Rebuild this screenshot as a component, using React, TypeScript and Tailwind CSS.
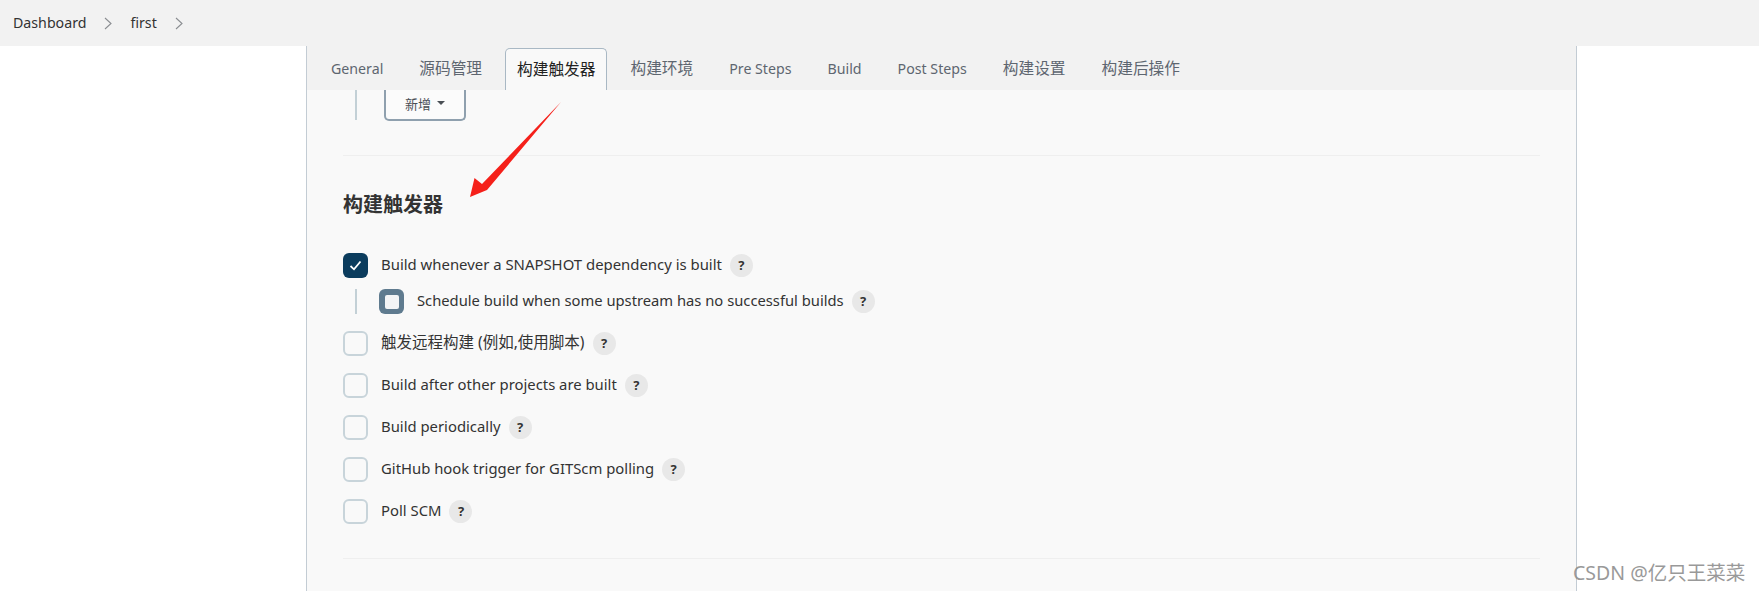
import React from "react";

const font = { fontFamily: '"Noto Sans", "Noto Sans CJK SC", sans-serif' };

const tabs = [
  { name: "General", cjk: false },
  { name: "源码管理", cjk: true },
  { name: "构建触发器", cjk: true, active: true },
  { name: "构建环境", cjk: true },
  { name: "Pre Steps", cjk: false },
  { name: "Build", cjk: false },
  { name: "Post Steps", cjk: false },
  { name: "构建设置", cjk: true },
  { name: "构建后操作", cjk: true },
];

const Chevron = () => (
  <svg width="8" height="13" viewBox="0 0 8 13" fill="none" stroke="#8a8d91" strokeWidth="1.1">
    <polyline points="1,1 7,6.5 1,12" />
  </svg>
);

const Help = () => (
  <span className="ml-[8px] flex h-[23px] w-[23px] shrink-0 items-center justify-center rounded-full bg-[#e8e8e8] text-[13px] font-bold text-[#333]">
    ?
  </span>
);

const Box = () => (
  <span className="box-border h-[25px] w-[25px] shrink-0 rounded-[6px] border-[2px] border-[#c8d4da] bg-[#f9f9f9]" />
);

const Row = ({ label, cjk }: { label: string; cjk?: boolean }) => (
  <div className="mt-[17px] flex h-[25px] items-center">
    <Box />
    <span className={cjk ? "ml-[13px] whitespace-nowrap pb-[2px] text-[15.5px] text-[#333]" : "ml-[13px] whitespace-nowrap pb-[2px] text-[14.85px] text-[#333]"}>
      {label}
    </span>
    <Help />
  </div>
);

const App = () => {
  return (
    <div className="relative h-[591px] w-full overflow-hidden bg-white" style={font}>
      <div className="flex h-[46px] items-center bg-[#f2f2f2] pl-[13px] text-[14.2px] text-[#333]">
        <span>Dashboard</span>
        <span className="ml-[18px]"><Chevron /></span>
        <span className="ml-[18px]">first</span>
        <span className="ml-[18px]"><Chevron /></span>
      </div>

      <div className="ml-[306px] h-[545px] w-[1271px] border-x border-[#c3ccd4] bg-[#f9f9f9]">
        <div className="flex h-[44px] items-end gap-[10px] bg-[#f2f2f2] pl-[11px]">
          {tabs.map((tab) =>
            tab.active ? (
              <div
                key={tab.name}
                className="flex h-[42px] items-center rounded-t-[5px] border-x border-t border-[#a9b8c4] bg-[#f9f9f9] px-[11px] text-[15.7px] text-[#222]"
              >
                {tab.name}
              </div>
            ) : (
              <div
                key={tab.name}
                className={tab.cjk ? "flex h-[42px] items-center px-[13px] text-[15.7px] text-[#5e6670]" : "flex h-[42px] items-center px-[13px] text-[14.2px] text-[#5e6670]"}
              >
                {tab.name}
              </div>
            )
          )}
        </div>

        <div className="px-[36px]">
          <div className="flex h-[31px]">
            <div className="ml-[12px] h-[30px] w-[2px] bg-[#c3d0d6]" />
            <div className="ml-[27px] flex h-[31px] w-[82px] items-center justify-center gap-[6px] rounded-b-[5px] border-x-2 border-b-2 border-[#8fa0ae] bg-[#fbfbfb] text-[13px] text-[#4a4f55]">
              <span>新增</span>
              <span className="mb-[3px] h-0 w-0 border-x-[4px] border-t-[4px] border-x-transparent border-t-[#4a4f55]" />
            </div>
          </div>

          <div className="mt-[34px] h-[1px] w-[1197px] bg-[#efefef]" />

          <h2 className="mt-[35px] text-[20px] leading-[28px] font-bold text-[#333]">构建触发器</h2>

          <div className="mt-[34px] flex h-[25px] items-center">
            <span className="flex h-[25px] w-[25px] shrink-0 items-center justify-center rounded-[6px] bg-[#0b3c5d]">
              <svg width="13" height="11" viewBox="0 0 13 11" fill="none" stroke="#fff" strokeWidth="1.8">
                <polyline points="1.5,6 5,9.3 11.5,1.5" />
              </svg>
            </span>
            <span className="ml-[13px] whitespace-nowrap pb-[2px] text-[14.9px] text-[#333]">Build whenever a SNAPSHOT dependency is built</span>
            <Help />
          </div>

          <div className="mt-[11px] flex h-[25px] items-center">
            <div className="ml-[12px] h-[25px] w-[2px] bg-[#c3d0d6]" />
            <span className="ml-[22px] flex h-[25px] w-[25px] shrink-0 items-center justify-center rounded-[6px] bg-[#5f7b8f]">
              <span className="h-[14px] w-[14px] rounded-[2px] bg-[#f4f5f6]" />
            </span>
            <span className="ml-[13px] whitespace-nowrap pb-[2px] text-[14.75px] text-[#333]">Schedule build when some upstream has no successful builds</span>
            <Help />
          </div>

          <Row label="触发远程构建 (例如,使用脚本)" cjk />
          <Row label="Build after other projects are built" />
          <Row label="Build periodically" />
          <Row label="GitHub hook trigger for GITScm polling" />
          <Row label="Poll SCM" />

          <div className="mt-[34px] h-[1px] w-[1197px] bg-[#efefef]" />
        </div>
      </div>

      {/* red annotation arrow */}
      <svg className="absolute top-0 left-0" width="600" height="210" viewBox="0 0 600 210">
        <polygon points="561,102 487,190 470,197 474.5,178 482,184" fill="#f5201a" />
      </svg>

      <span className="absolute top-[558px] left-[1573px] whitespace-nowrap text-[19.5px] text-[#8f8f8f] opacity-90">
        CSDN @亿只王菜菜
      </span>
    </div>
  );
};

export default App;
